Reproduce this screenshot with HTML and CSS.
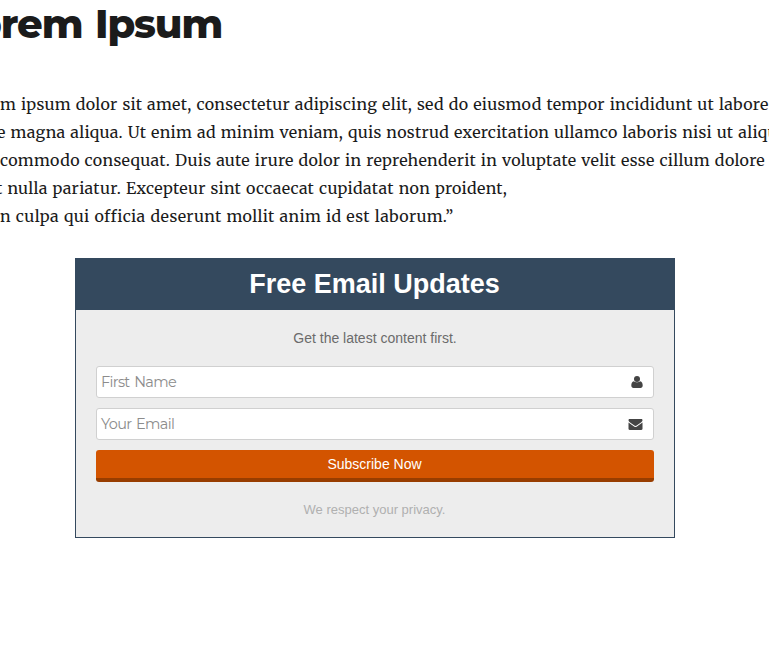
FILE: index.html
```html
<!DOCTYPE html>
<html lang="en">
<head>
<meta charset="utf-8">
<title>Lorem Ipsum</title>
<link rel="stylesheet" href="styles.css">
</head>
<body>
<main class="page">
  <h1 class="title">Lorem Ipsum</h1>
  <div class="copy">
    <p class="line line-1">m ipsum dolor sit amet, consectetur adipiscing elit, sed do eiusmod tempor incididunt ut labore</p>
    <p class="line line-2">e magna aliqua. Ut enim ad minim veniam, quis nostrud exercitation ullamco laboris nisi ut aliqu</p>
    <p class="line line-3">commodo consequat. Duis aute irure dolor in reprehenderit in voluptate velit esse cillum dolore</p>
    <p class="line line-4">t nulla pariatur. Excepteur sint occaecat cupidatat non proident,</p>
    <p class="line line-5">n culpa qui officia deserunt mollit anim id est laborum.”</p>
  </div>
  <section class="optin">
    <h2 class="optin-title">Free Email Updates</h2>
    <form class="optin-body">
      <p class="lead">Get the latest content first.</p>
      <label class="field"><span class="hint">First Name</span>
        <svg class="icon user" viewBox="0 0 12 12"><circle cx="6" cy="3" r="3"/><path d="M2.900 5.200C1 5.400.3 7.400.3 9.500.3 11 1.200 12 2.500 12h7c1.300 0 2.200-1 2.200-2.500 0-2.100-.7-4.100-2.600-4.300C8.300 6 7.200 6.200 6 6.200S3.700 6 2.900 5.200z"/></svg>
      </label>
      <label class="field"><span class="hint">Your Email</span>
        <svg class="icon mail" viewBox="0 0 14 11"><path d="M0 1.200C0 .5.500 0 1.200 0h11.600c.7 0 1.200.5 1.200 1.200 0 .8-.6 1.500-1.200 2L8.500 6.200C8 6.600 7.500 7 7 7s-1-.4-1.500-.8L1.200 3.200C.6 2.700 0 2 0 1.200zM0 3.500l4.900 3.500C5.600 7.500 6.200 8 7 8s1.400-.5 2.100-1L14 3.500v6.300c0 .7-.5 1.200-1.200 1.200H1.200C.5 11 0 10.500 0 9.800z"/></svg>
      </label>
      <button class="submit" type="button">Subscribe Now</button>
      <p class="privacy">We respect your privacy.</p>
    </form>
  </section>
</main>
</body>
</html>
```
FILE: styles.css
```css
* { box-sizing: border-box; }
body { margin: 0; background: #fff; overflow: hidden; }
p, h1, h2 { margin: 0; }
.page { width: 769px; height: 666px; overflow: hidden; }
.title {
  height: 90px;
  margin-left: -48px;
  font: 800 40px/48px Montserrat, Inter, sans-serif;
  letter-spacing: -1.1px;
  word-spacing: 2px;
  color: #1b1b1b;
  white-space: nowrap;
}
.copy {
  height: 168px;
  color: #1b1b1b;
  font: 16px/28px Merriweather, "Noto Serif", "Droid Serif", "DejaVu Serif Condensed", serif;
  letter-spacing: 0.3px;
  word-spacing: 0.75px;
}
.line { white-space: nowrap; }
.line-2 { margin-left: -3px; letter-spacing: 0.28px; }
.line-3 { letter-spacing: 0.29px; }
.line-4 { margin-left: -4px; letter-spacing: 0.3px; }
.line-5 { letter-spacing: 0.35px; }
.optin {
  width: 600px;
  height: 280px;
  margin-left: 75px;
  border: 1px solid #34495e;
  background: #ededed;
  font-family: "Liberation Sans", Arial, sans-serif;
  text-align: center;
}
.optin-title {
  height: 51px;
  padding-right: 1px;
  background: #34495e;
  color: #fff;
  font-size: 27px;
  line-height: 50px;
}
.optin-body { padding: 0 20px; }
.lead { padding: 18px 0 0; height: 56px; font-size: 14px; line-height: 20px; color: #6b6b6b; }
.field {
  display: flex;
  align-items: center;
  justify-content: space-between;
  height: 32px;
  margin-bottom: 10px;
  padding: 0 10px 0 4px;
  background: #fff;
  border: 1px solid #d0d0d0;
  border-radius: 3px;
}
.hint { font: 14.5px/30px Montserrat, Inter, sans-serif; letter-spacing: -0.65px; word-spacing: 1.5px; color: #8c8c8c; }
.icon { fill: #444; }
.user { width: 12px; height: 12px; }
.mail { width: 15px; height: 11px; }
.submit {
  display: block;
  width: 100%;
  height: 32px;
  padding: 0 1px 0 0;
  border: 0;
  border-bottom: 4px solid #983d00;
  border-radius: 3px;
  background: #d35400;
  color: #fff;
  font: 14px/28px "Liberation Sans", Arial, sans-serif;
}
.privacy { padding: 18px 1px 0 0; font-size: 13px; line-height: 20px; color: #b0b0b0; }
```
